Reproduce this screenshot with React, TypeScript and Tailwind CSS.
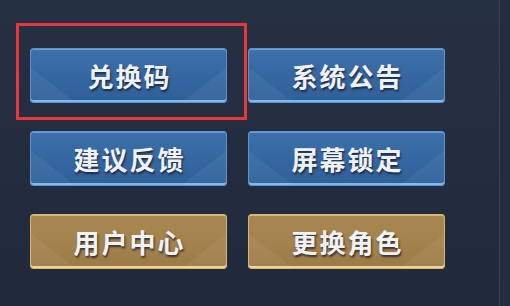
import React from "react";

type Tone = "blue" | "gold";

interface MenuButtonProps {
  label: string;
  tone: Tone;
  highlighted?: boolean;
}

const toneClass: Record<Tone, string> = {
  blue: "border-[#5f93c9] bg-[linear-gradient(180deg,#3c70a9_0%,#3566a0_55%,#2f6098_100%)] shadow-[inset_0_-2px_0_#77b8ee,inset_0_1px_0_#6a9fd4]",
  gold: "border-[#d9b56f] bg-[linear-gradient(180deg,#a98750_0%,#a4824d_55%,#9c7a46_100%)] shadow-[inset_0_-2px_0_#f0d58e,inset_0_1px_0_#d9b876]",
};

const MenuButton: React.FC<MenuButtonProps> = ({ label, tone, highlighted }) => {
  return (
    <div className="relative h-[55px] w-[197px]">
      <button
        type="button"
        className={`relative flex h-full w-full items-center justify-center overflow-hidden rounded-[3px] border ${toneClass[tone]}`}
      >
        <span className="pointer-events-none absolute bottom-0 left-0 h-[34px] w-[44px] bg-[linear-gradient(to_top_right,rgba(255,255,255,0.05)_50%,transparent_50%)]" />
        <span className="pointer-events-none absolute bottom-0 right-0 h-[34px] w-[44px] bg-[linear-gradient(to_top_left,rgba(255,255,255,0.05)_50%,transparent_50%)]" />
        <span className="relative pl-[2px] text-[26px] font-bold leading-none tracking-[2px] text-[#f1f2f5] [font-family:'Noto_Sans_CJK_SC',sans-serif] [text-shadow:1px_2px_2px_rgba(20,25,40,0.75)]">
          {label}
        </span>
      </button>
      {highlighted && (
        <div className="pointer-events-none absolute -left-[14px] -top-[25px] h-[97px] w-[231px] border-[3px] border-[#e8383b]" />
      )}
    </div>
  );
};

const App: React.FC = () => {
  return (
    <div className="flex h-[306px] w-[510px] overflow-hidden bg-[linear-gradient(180deg,#263043_0%,#232c3f_60%,#212a3c_100%)]">
      <div className="h-full w-[500px] shrink-0 border-r border-[#36415a] pl-[30px] pt-[48px]">
        <div className="grid grid-cols-[197px_197px] gap-x-[21px] gap-y-[28px]">
          <MenuButton label="兑换码" tone="blue" highlighted />
          <MenuButton label="系统公告" tone="blue" />
          <MenuButton label="建议反馈" tone="blue" />
          <MenuButton label="屏幕锁定" tone="blue" />
          <MenuButton label="用户中心" tone="gold" />
          <MenuButton label="更换角色" tone="gold" />
        </div>
      </div>
      <div className="h-full flex-1 bg-[#242d40]" />
    </div>
  );
};

export default App;
